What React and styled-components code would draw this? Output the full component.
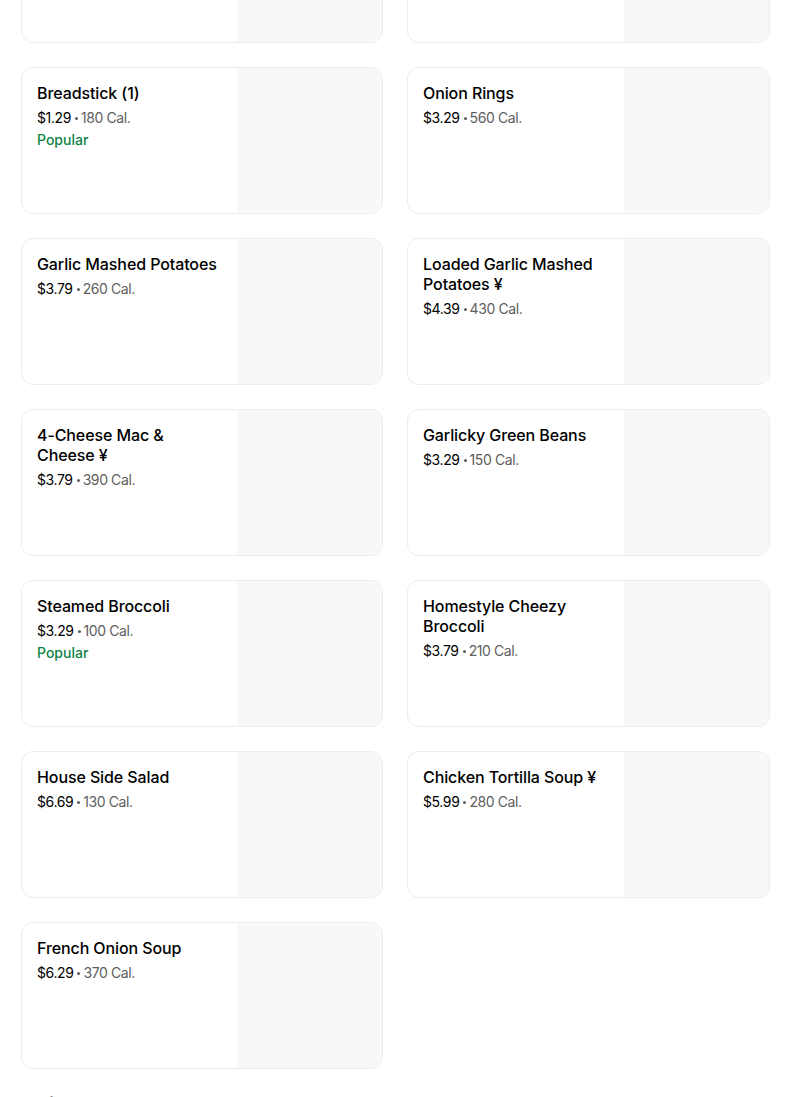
import styled, { createGlobalStyle } from 'styled-components'

const GlobalStyle = createGlobalStyle`
  body {
    margin: 0;
    background: #ffffff;
    font-family: Inter, "Noto Sans", sans-serif;
    color: #000000;
    overflow: hidden;
  }
`

const Page = styled.div`
  padding: 0 34px 0 21px;
  height: 1097px;
  overflow: hidden;
`

const Grid = styled.div`
  display: grid;
  grid-template-columns: 362px 363px;
  gap: 24px;
  margin-top: -104px;
`

const Card = styled.div`
  display: flex;
  height: 147px;
  box-sizing: border-box;
  border: 1px solid #ececec;
  border-radius: 12px;
  overflow: hidden;
  background: #ffffff;
`

const Info = styled.div`
  flex: 1;
  min-width: 0;
  padding: 15px 16px 0 15px;
  display: flex;
  flex-direction: column;
`

const Title = styled.div`
  font-size: 16px;
  line-height: 20px;
  font-weight: 500;
  letter-spacing: -0.1px;
  color: #000000;
`

const Meta = styled.div`
  margin-top: 5px;
  font-size: 14px;
  line-height: 20px;
  color: #000000;
  letter-spacing: -0.4px;
`

const Muted = styled.span`
  color: #5e5e5e;
`

const Dot = styled.span`
  display: inline-block;
  width: 3px;
  height: 3px;
  margin: 0 3px 0 4px;
  border-radius: 50%;
  background: #5e5e5e;
  vertical-align: middle;
  position: relative;
  top: -1px;
`

const Tag = styled.div`
  margin-top: 2px;
  font-size: 14px;
  line-height: 20px;
  font-weight: 500;
  color: #0e8345;
`

const Picture = styled.div`
  flex: 0 0 145px;
  background: #f8f8f8;
`

const Section = styled.h2`
  margin: 22px 0 0;
  font-size: 24px;
  line-height: 32px;
  font-weight: 700;
  color: #000000;
`

const items = [
  { name: '', price: '', cal: '' },
  { name: '', price: '', cal: '' },
  { name: 'Breadstick (1)', price: '$1.29', cal: '180 Cal.', popular: true },
  { name: 'Onion Rings', price: '$3.29', cal: '560 Cal.' },
  { name: 'Garlic Mashed Potatoes', price: '$3.79', cal: '260 Cal.' },
  { name: 'Loaded Garlic Mashed Potatoes\u00a0¥', price: '$4.39', cal: '430 Cal.' },
  { name: '4-Cheese Mac & Cheese\u00a0¥', price: '$3.79', cal: '390 Cal.' },
  { name: 'Garlicky Green Beans', price: '$3.29', cal: '150 Cal.' },
  { name: 'Steamed Broccoli', price: '$3.29', cal: '100 Cal.', popular: true },
  { name: 'Homestyle Cheezy Broccoli', price: '$3.79', cal: '210 Cal.' },
  { name: 'House Side Salad', price: '$6.69', cal: '130 Cal.' },
  { name: 'Chicken Tortilla Soup\u00a0¥', price: '$5.99', cal: '280 Cal.' },
  { name: 'French Onion Soup', price: '$6.29', cal: '370 Cal.' }
]

const MenuCard = ({ item }) => (
  <Card>
    <Info>
      {item.name && <Title>{item.name}</Title>}
      {item.price && (
        <Meta>
          {item.price}
          <Dot />
          <Muted>{item.cal}</Muted>
        </Meta>
      )}
      {item.popular && <Tag>Popular</Tag>}
    </Info>
    <Picture />
  </Card>
)

const App = () => (
  <>
    <GlobalStyle />
    <Page>
      <Grid>
        {items.map((item, i) => (
          <MenuCard key={i} item={item} />
        ))}
      </Grid>
      <Section>Drinks</Section>
    </Page>
  </>
)

export default App
